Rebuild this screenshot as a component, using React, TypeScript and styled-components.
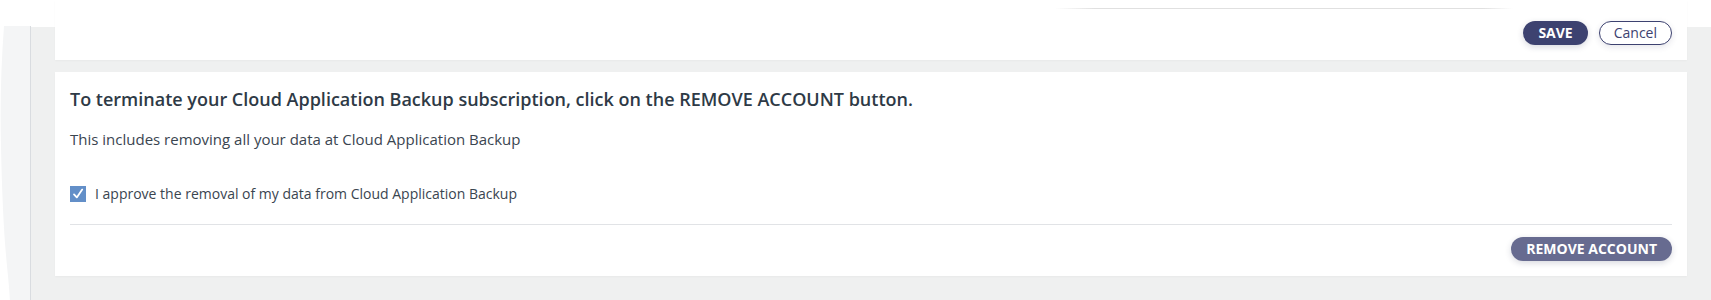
import styled, { createGlobalStyle } from 'styled-components';

const GlobalStyle = createGlobalStyle`
  html, body {
    margin: 0;
    padding: 0;
    background: #ffffff;
  }

  body {
    font-family: 'Open Sans', 'Noto Sans', Arial, sans-serif;
    color: #3a4550;
  }
`;

export default function App() {
  return (
    <>
      <GlobalStyle />
      <Page>
        <SideEdge>
          <svg viewBox="0 0 30 280" preserveAspectRatio="none" aria-hidden="true">
            <path
              d="M4 0 C1 40 0 80 1 120 C2 170 4 210 7 240 C9 260 10 272 10 280 L30 280 L30 0 Z"
              fill="#f4f5f6"
            />
          </svg>
        </SideEdge>
        <Main>
          <Card $compact>
            <FieldLine />
            <Actions>
              <PrimaryButton type="button">SAVE</PrimaryButton>
              <OutlineButton type="button">Cancel</OutlineButton>
            </Actions>
          </Card>

          <Card>
            <Title>
              To terminate your Cloud Application Backup subscription, click on the REMOVE ACCOUNT button.
            </Title>
            <Note>This includes removing all your data at Cloud Application Backup</Note>
            <ApproveRow>
              <CheckBox aria-checked="true" role="checkbox">
                <svg viewBox="0 0 16 16" width="16" height="16" aria-hidden="true">
                  <path d="M4 8.4 L6.8 11.4 L12.2 3.6" fill="none" stroke="#ffffff" strokeWidth="1.8" strokeLinecap="round" strokeLinejoin="round" />
                </svg>
              </CheckBox>
              <span>I approve the removal of my data from Cloud Application Backup</span>
            </ApproveRow>
            <Divider />
            <Actions>
              <PrimaryButton type="button" $muted>
                REMOVE ACCOUNT
              </PrimaryButton>
            </Actions>
          </Card>
        </Main>
      </Page>
    </>
  );
}

const Page = styled.div`
  display: flex;
  min-height: 300px;
  background: #ffffff;
`;

const SideEdge = styled.div`
  flex: 0 0 30px;
  margin-top: 26px;
  border-right: 1px solid #d9dce0;
  display: flex;

  svg {
    width: 100%;
    height: 100%;
    display: block;
  }
`;

const Main = styled.main`
  flex: 1;
  display: flex;
  flex-direction: column;
  gap: 12px;
  padding: 0 24px 24px;
  background: linear-gradient(to bottom, #ffffff 0, #ffffff 27px, #eff0f0 27px);
`;

const Card = styled.section<{ $compact?: boolean }>`
  background: #ffffff;
  padding: ${(p) => (p.$compact ? '8px 15px 15px' : '15px')};
  box-shadow: 0 1px 2px rgba(0, 0, 0, 0.03);
`;

const FieldLine = styled.div`
  height: 1px;
  width: 458px;
  margin-left: auto;
  margin-right: 159px;
  margin-bottom: 12px;
  background: linear-gradient(to right, rgba(224, 224, 224, 0), #e0e0e0 40px, #e0e0e0 calc(100% - 30px), rgba(224, 224, 224, 0));
`;

const Actions = styled.div`
  display: flex;
  justify-content: flex-end;
  align-items: center;
  gap: 11px;
`;

const PrimaryButton = styled.button<{ $muted?: boolean }>`
  height: 24px;
  padding: 0 15px;
  border: none;
  border-radius: 12px;
  background: ${(p) => (p.$muted ? '#676b90' : '#3d4270')};
  color: #ffffff;
  font-family: 'Open Sans', Arial, sans-serif;
  font-size: 14px;
  font-weight: 700;
  line-height: 24px;
  box-shadow: 0 2px 6px rgba(40, 44, 80, 0.18);
  cursor: pointer;
`;

const OutlineButton = styled.button`
  height: 24px;
  padding: 0 14px;
  border: 1px solid #3d4270;
  border-radius: 12px;
  background: #ffffff;
  color: #3d4270;
  font-family: 'Open Sans', Arial, sans-serif;
  font-size: 14px;
  font-weight: 400;
  line-height: 22px;
  box-shadow: 0 2px 6px rgba(40, 44, 80, 0.12);
  cursor: pointer;
`;

const Title = styled.h2`
  margin: 0;
  font-size: 18px;
  font-weight: 600;
  line-height: 24px;
  color: #2e3a46;
`;

const Note = styled.p`
  margin: 18px 0 0;
  font-size: 15px;
  line-height: 20px;
  color: #3a4550;
`;

const ApproveRow = styled.label`
  display: flex;
  align-items: center;
  gap: 9px;
  margin-top: 35px;
  font-size: 14px;
  line-height: 20px;
  color: #3a4550;
`;

const CheckBox = styled.span`
  width: 16px;
  height: 16px;
  flex: 0 0 16px;
  background: #638fc8;
  display: flex;
  align-items: center;
  justify-content: center;
`;

const Divider = styled.hr`
  margin: 20px 0 12px;
  border: none;
  border-top: 1px solid #e1e3e6;
`;
